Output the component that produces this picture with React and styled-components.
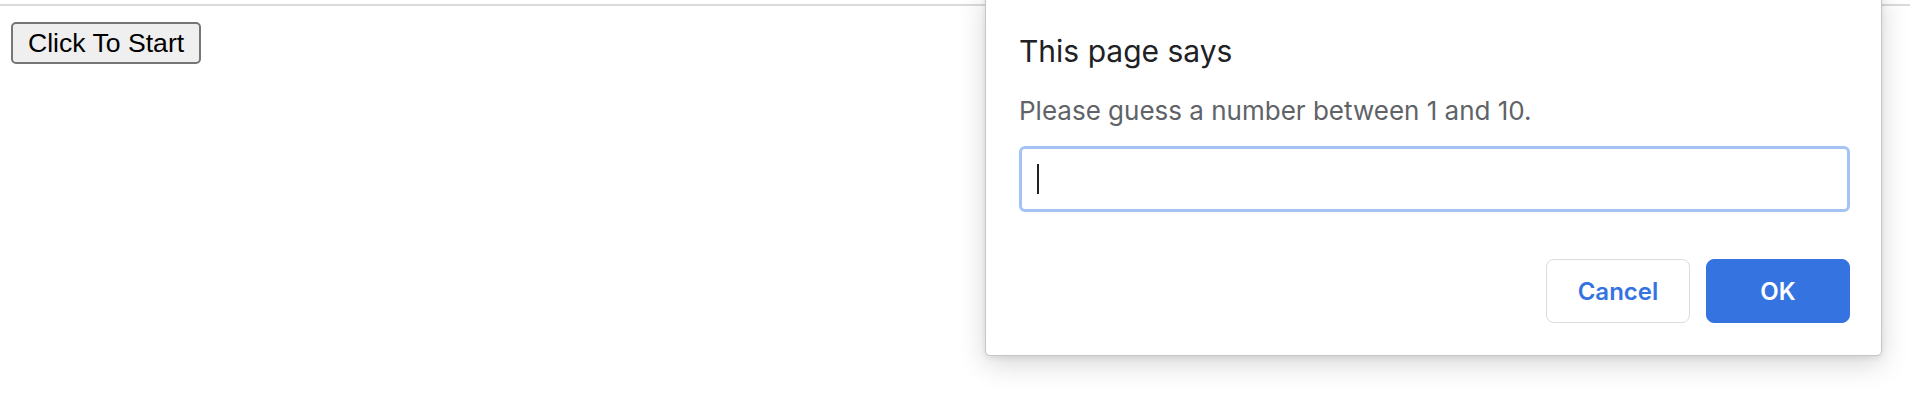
import React from "react";
import styled, { createGlobalStyle } from "styled-components";

const GlobalStyle = createGlobalStyle`
  html, body {
    margin: 0;
    background: #fff;
    overflow: hidden;
  }
  body {
    font-family: "Liberation Sans", Arial, sans-serif;
  }
`;

const Page = styled.div`
  position: relative;
  height: 400px;
  padding-top: 4px;
  box-sizing: border-box;
`;

const TopRule = styled.div`
  height: 2px;
  background: #dadada;
`;

const StartButton = styled.button`
  margin: 16px 0 0 11px;
  height: 42px;
  padding: 0 15px;
  font-family: "Liberation Sans", Arial, sans-serif;
  font-size: 26.6px;
  color: #000;
  background: #efefef;
  border: 2px solid #767676;
  border-radius: 5px;
`;

const Dialog = styled.div`
  position: absolute;
  left: 985px;
  top: -10px;
  width: 897px;
  box-sizing: border-box;
  padding: 42px 31px 32px 33px;
  background: #fff;
  border: 1px solid #c6c6c6;
  border-radius: 0 0 5px 5px;
  box-shadow: 0 8px 28px rgba(0, 0, 0, 0.16), 0 2px 6px rgba(0, 0, 0, 0.08);
  font-family: Inter, "Noto Sans", sans-serif;
`;

const Title = styled.h2`
  margin: 0;
  font-size: 30px;
  font-weight: 400;
  line-height: 36px;
  color: #202124;
`;

const Message = styled.p`
  margin: 26px 0 0;
  font-size: 26px;
  line-height: 32px;
  color: #5f6368;
`;

const Field = styled.div`
  display: flex;
  align-items: center;
  margin-top: 19px;
  height: 66px;
  box-sizing: border-box;
  padding-left: 15px;
  border: 3px solid #a4c2f4;
  border-radius: 6px;
`;

const Caret = styled.span`
  width: 2px;
  height: 30px;
  background: #202124;
`;

const Actions = styled.div`
  display: flex;
  justify-content: flex-end;
  gap: 16px;
  margin-top: 47px;
`;

const ActionButton = styled.button`
  width: 144px;
  height: 64px;
  box-sizing: border-box;
  border-radius: 8px;
  font-family: Inter, "Noto Sans", sans-serif;
  font-size: 24px;
  font-weight: 600;
  border: 1px solid ${(p) => (p.$primary ? "#3574e0" : "#dadce0")};
  background: ${(p) => (p.$primary ? "#3574e0" : "#fff")};
  color: ${(p) => (p.$primary ? "#fff" : "#3574e0")};
`;

export default function App() {
  return (
    <>
      <GlobalStyle />
      <Page>
        <TopRule />
        <StartButton>Click To Start</StartButton>
        <Dialog role="dialog">
          <Title>This page says</Title>
          <Message>Please guess a number between 1 and 10.</Message>
          <Field>
            <Caret />
          </Field>
          <Actions>
            <ActionButton>Cancel</ActionButton>
            <ActionButton $primary>OK</ActionButton>
          </Actions>
        </Dialog>
      </Page>
    </>
  );
}
